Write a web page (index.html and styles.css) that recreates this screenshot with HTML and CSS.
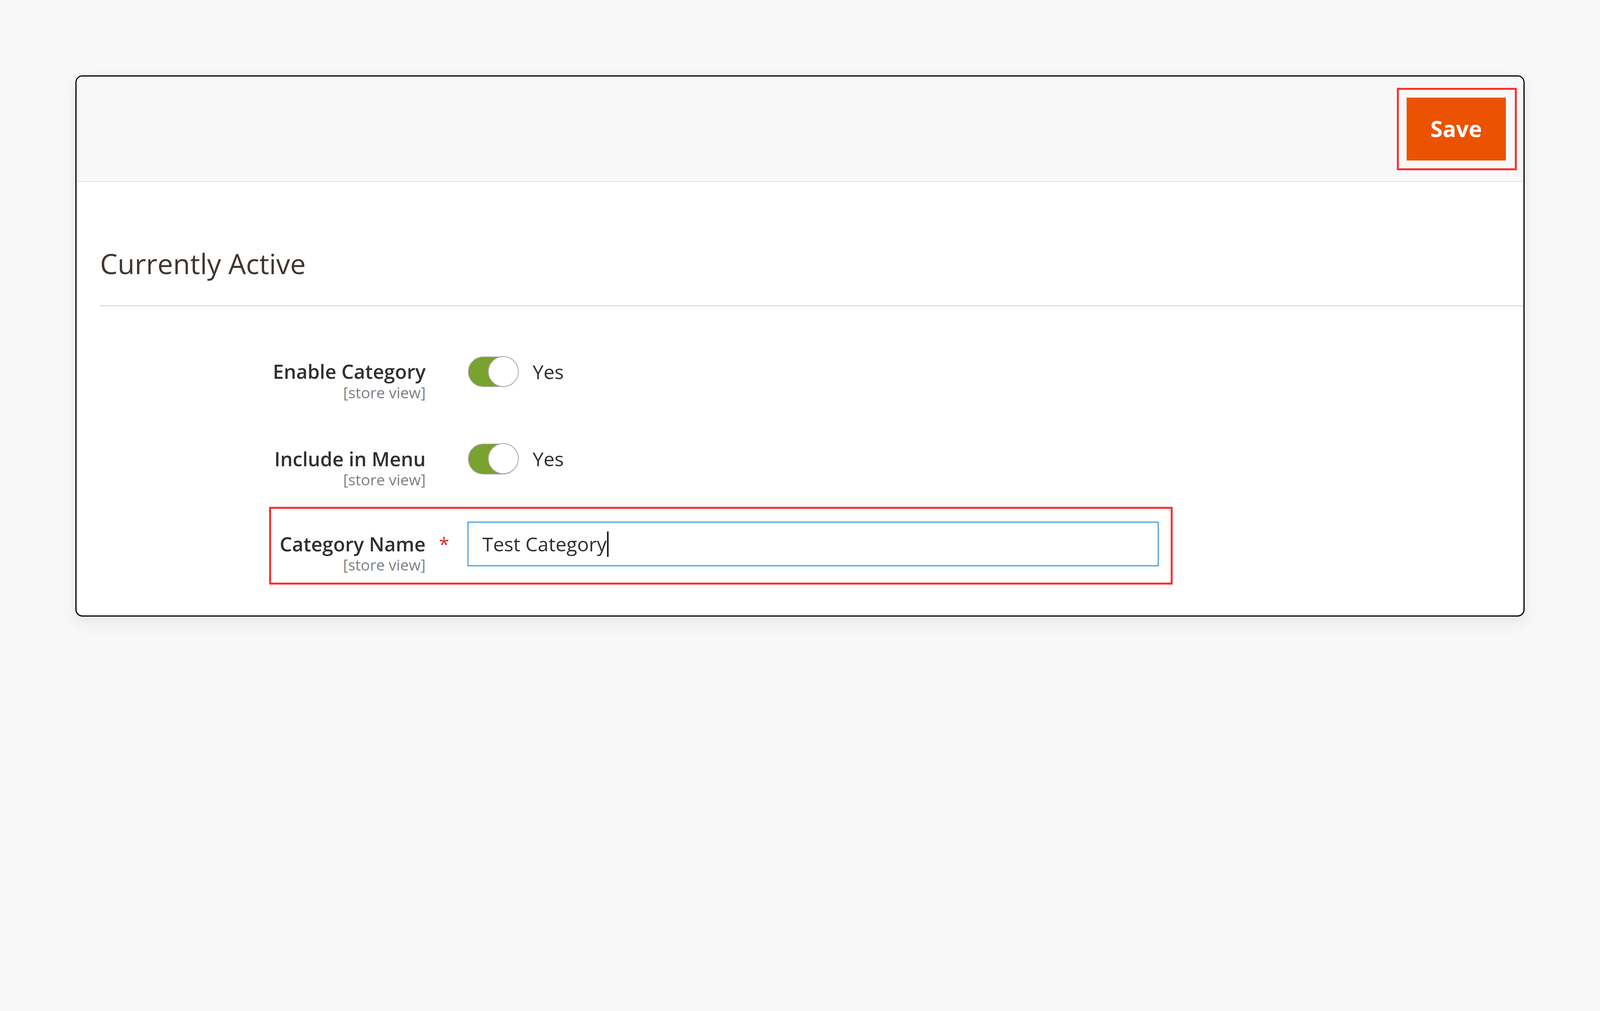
FILE: index.html
```html
<!DOCTYPE html>
<html lang="en">
<head>
<meta charset="utf-8">
<title>Category</title>
<link rel="stylesheet" href="styles.css">
</head>
<body>
<div class="card">
  <div class="page-actions">
    <div class="highlight highlight-save">
      <button class="btn-save" type="button">Save</button>
    </div>
  </div>
  <div class="card-body">
    <h2 class="section-title">Currently Active</h2>

    <div class="field-row">
      <div class="field-label">
        <div class="label-text">Enable Category</div>
        <div class="scope">[store view]</div>
      </div>
      <div class="field-req"></div>
      <div class="field-control">
        <span class="switch"><span class="knob"></span></span>
        <span class="switch-text">Yes</span>
      </div>
    </div>

    <div class="field-row field-row-2">
      <div class="field-label">
        <div class="label-text">Include in Menu</div>
        <div class="scope">[store view]</div>
      </div>
      <div class="field-req"></div>
      <div class="field-control">
        <span class="switch"><span class="knob"></span></span>
        <span class="switch-text">Yes</span>
      </div>
    </div>

    <div class="highlight highlight-field">
      <div class="field-row field-row-name">
        <div class="field-label field-label-input">
          <div class="label-text">Category Name</div>
          <div class="scope">[store view]</div>
        </div>
        <div class="field-req field-req-input"><span class="asterisk">*</span></div>
        <div class="text-input"><span class="input-value">Test Category</span><span class="caret"></span></div>
      </div>
    </div>
  </div>
</div>
</body>
</html>
```

FILE: styles.css
```css
html, body {
  margin: 0;
  padding: 0;
}

body {
  background: #f8f8f8;
  font-family: "Open Sans", "Noto Sans", sans-serif;
  color: #303030;
  padding: 193.4px;
}

.card {
  border: 3.5px solid #000;
  border-radius: 18px;
  background: #fff;
  overflow: hidden;
  box-shadow: 0 20px 42px rgba(0, 0, 0, 0.06), 0 0 24px rgba(0, 0, 0, 0.035);
}

.page-actions {
  background: #f8f8f8;
  border-bottom: 2.75px solid #e3e3e3;
  display: flex;
  justify-content: flex-end;
  padding: 28.8px 17.1px 27.4px;
}

.highlight {
  border: 5.5px solid #ff2e2e;
}

.highlight-save {
  padding: 19.9px 22.6px 20.6px 19.9px;
}

.btn-save {
  display: flex;
  align-items: center;
  justify-content: center;
  width: 254.4px;
  height: 160.5px;
  background: #eb5202;
  border: 0;
  color: #fff;
  font-family: "Open Sans", "Noto Sans", sans-serif;
  font-size: 57px;
  font-weight: 700;
  padding: 0 0 2px;
  margin: 0;
}

.card-body {
  padding: 166px 0 79.5px 59.7px;
}

.section-title {
  margin: 0;
  font-size: 71.3px;
  line-height: 85px;
  font-weight: 400;
  color: #41362f;
  padding-bottom: 65.8px;
  border-bottom: 2.1px solid #cccccc;
}

.field-row {
  display: grid;
  grid-template-columns: 833.8px 107.7px auto;
  align-items: start;
  margin-top: 128.2px;
}

.field-row-2 {
  margin-top: 109.7px;
}

.field-row-name {
  grid-template-columns: 395px 107.7px 1769.1px;
  margin-top: 0;
}

.highlight-field {
  margin: 48px 0 0 433.4px;
  width: fit-content;
  padding: 33.6px 30.9px 24px 0;
}

.field-label {
  text-align: right;
  padding-top: 8.9px;
}

.field-label-input {
  padding-top: 26.7px;
}

.label-text {
  font-size: 50px;
  line-height: 60.3px;
  font-weight: 600;
  color: #303030;
}

.scope {
  font-size: 39.1px;
  line-height: 42.5px;
  margin-top: 2px;
  color: #808080;
  font-weight: 400;
}

.field-req-input {
  padding: 26.7px 0 0 34.3px;
}

.asterisk {
  color: #e22626;
  font-size: 48px;
  line-height: 60.3px;
}

.field-control {
  display: flex;
  align-items: center;
  height: 78.9px;
}

.switch {
  display: flex;
  justify-content: flex-end;
  box-sizing: border-box;
  width: 129.6px;
  height: 78.9px;
  border: 2.75px solid #aba69f;
  border-radius: 40px;
  background: #79a22e;
}

.knob {
  box-sizing: border-box;
  width: 78.9px;
  height: 78.9px;
  margin: -2.75px;
  border: 2.75px solid #aba69f;
  border-radius: 50%;
  background: #fff;
}

.switch-text {
  margin-left: 36.3px;
  font-size: 50px;
  line-height: 60.3px;
  color: #303030;
}

.text-input {
  box-sizing: border-box;
  width: 1769.1px;
  height: 113.8px;
  border: 2.75px solid #007bdb;
  background: #fff;
  display: flex;
  align-items: center;
  padding-left: 35.7px;
  font-size: 50px;
  line-height: 60.3px;
  color: #303030;
}

.caret {
  display: inline-block;
  width: 4.1px;
  height: 65.1px;
  background: #1a1a1a;
  margin-left: 1.4px;
}
```
